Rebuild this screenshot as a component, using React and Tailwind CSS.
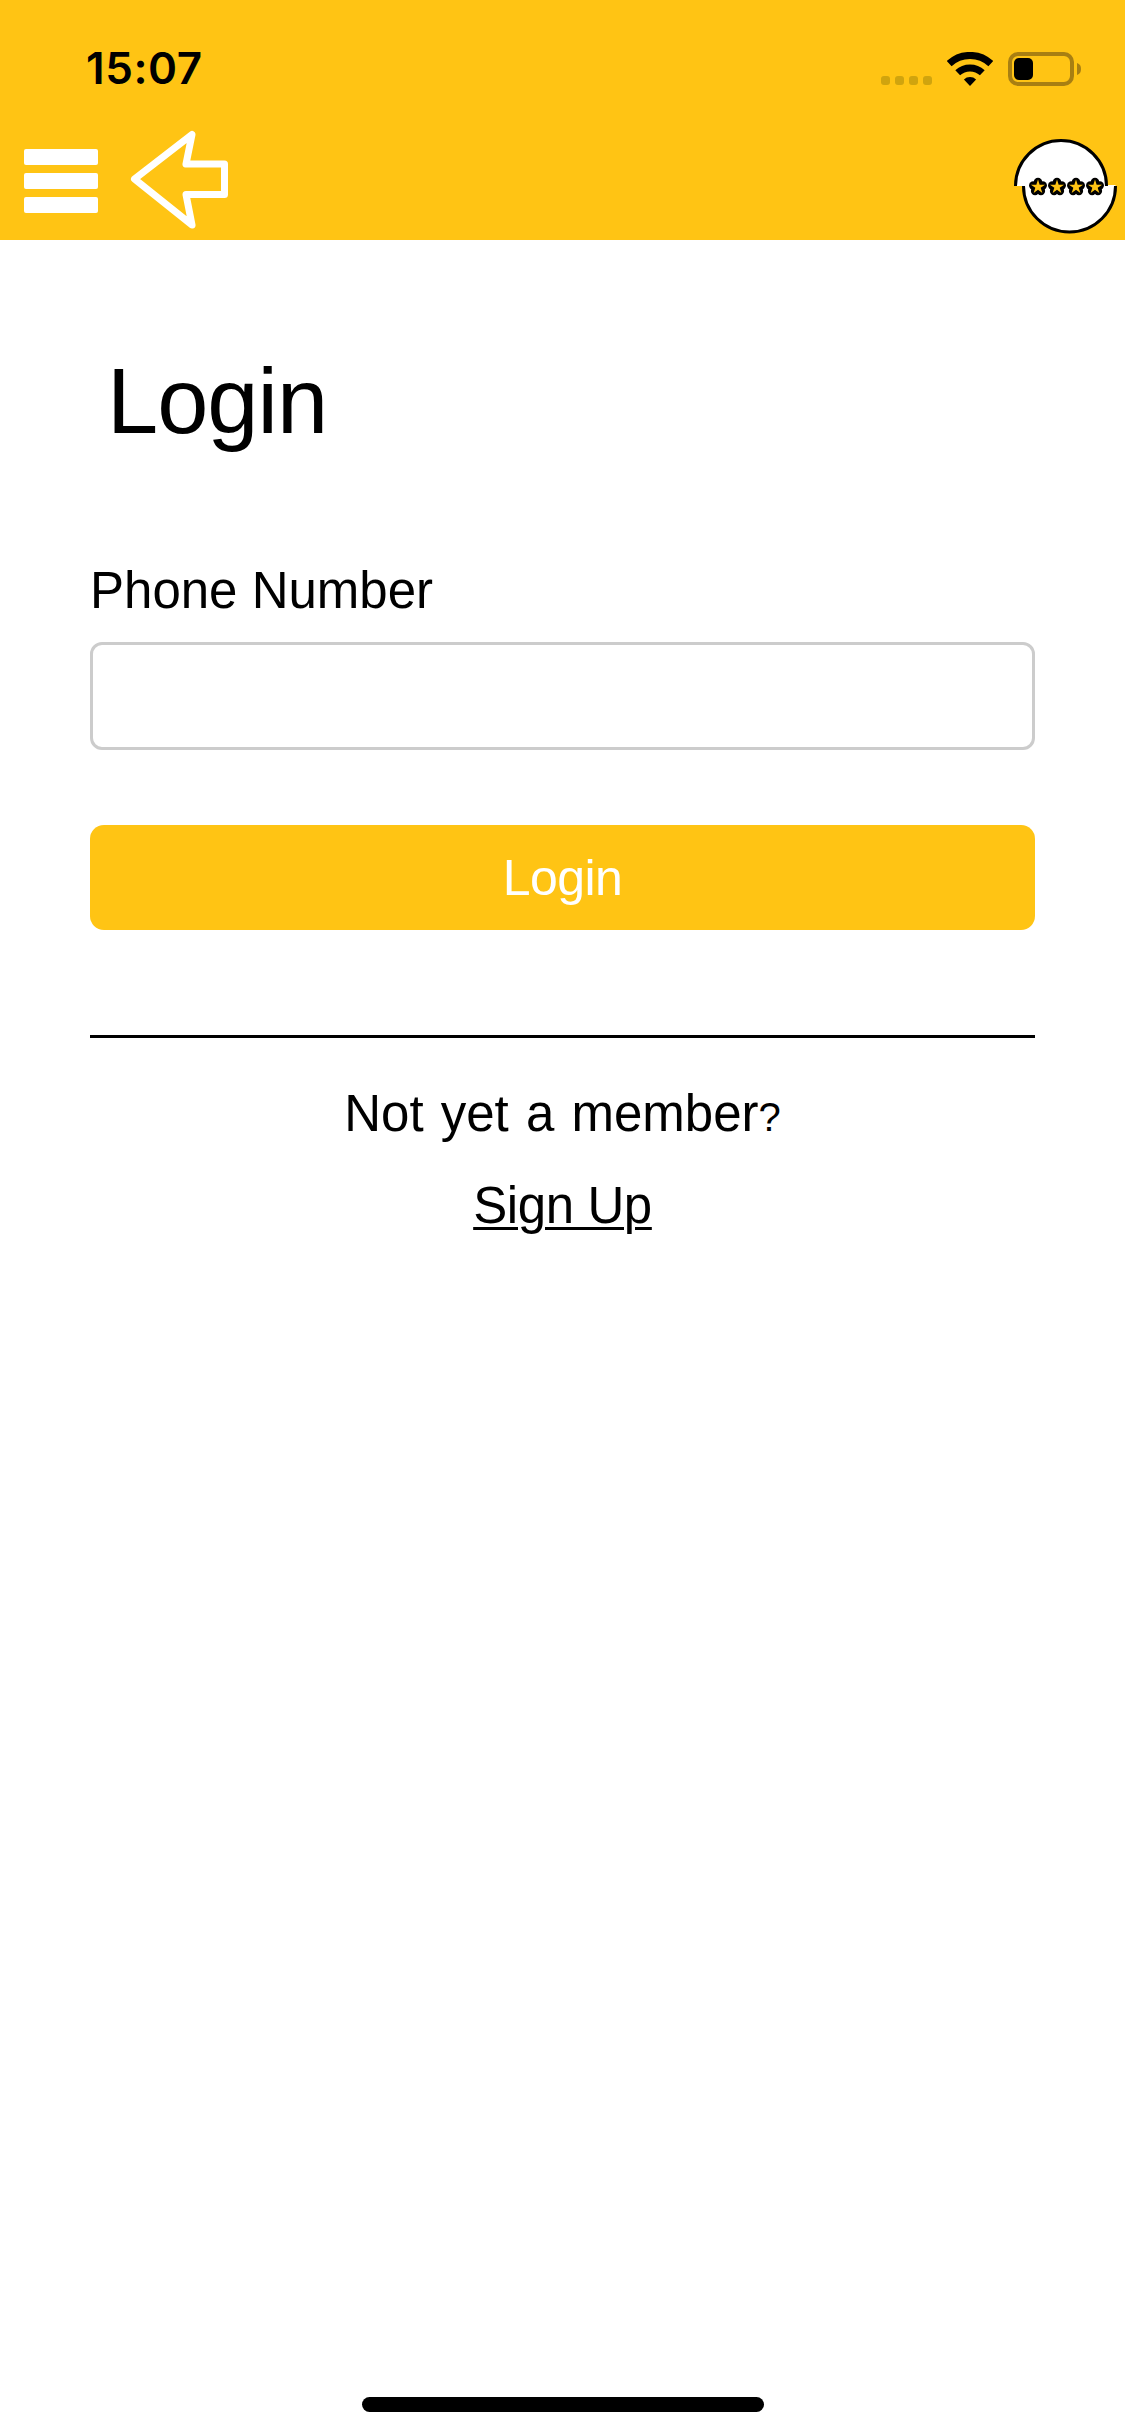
const font = { sans: "font-['Liberation_Sans',Arial,sans-serif]" };

function Wifi() {
  return (
    <svg width="46" height="34" viewBox="0 0 46 34" className="block">
      <path d="M2.2 11.6A30.5 30.5 0 0 1 43.8 11.6" fill="none" stroke="#000" strokeWidth="7" />
      <path d="M10.7 20.8A18 18 0 0 1 35.3 20.8" fill="none" stroke="#000" strokeWidth="7" />
      <path d="M23 34L16.9 27.4A9 9 0 0 1 29.1 27.4Z" fill="#000" />
    </svg>
  );
}

function Battery() {
  return (
    <svg width="74" height="34" viewBox="0 0 74 34" className="block">
      <rect x="2" y="2" width="62" height="30" rx="8" fill="none" stroke="#a87f12" strokeWidth="4" />
      <rect x="6" y="6" width="19" height="22" rx="5" fill="#000" />
      <path d="M69 11C72 12 73 14 73 17C73 20 72 22 69 23Z" fill="#a87f12" />
    </svg>
  );
}

function BackArrow() {
  return (
    <svg width="100" height="102" viewBox="130 129 100 102" className="block">
      <path
        d="M134.5 179L192 134.5L186 164H224.5V194.5H186L192 225Z"
        fill="none"
        stroke="#fff"
        strokeWidth="7"
        strokeLinejoin="round"
      />
    </svg>
  );
}

// Small black blossom holding a yellow star, one per rating point.
function Blossom({ x }) {
  const y = 187;
  const lobes = [0, 72, 144, 216, 288].map((deg) => {
    const r = (deg * Math.PI) / 180;
    return [x + Math.sin(r) * 5, y - Math.cos(r) * 5];
  });
  const star = [];
  for (let i = 0; i < 10; i++) {
    const r = (i * 36 * Math.PI) / 180;
    const d = i % 2 === 0 ? 7.4 : 2.8;
    star.push(`${x + Math.sin(r) * d},${y - Math.cos(r) * d}`);
  }
  return (
    <g>
      {lobes.map(([cx, cy], i) => (
        <circle key={i} cx={cx} cy={cy} r="4.2" fill="#000" />
      ))}
      <circle cx={x} cy={y} r="5.5" fill="#000" />
      <polygon points={star.join(" ")} fill="#ffc414" />
    </g>
  );
}

function RatingBadge() {
  return (
    <svg width="110" height="102" viewBox="1010 135 110 102" className="block">
      <path d="M1015.5 186A45.5 45.5 0 0 1 1106.5 186Z" fill="#fff" />
      <path d="M1023.5 185A46 46 0 0 0 1115.5 185Z" fill="#fff" />
      <path d="M1015.5 186A45.5 45.5 0 0 1 1106.5 186" fill="none" stroke="#000" strokeWidth="3" />
      <path d="M1023.5 186A46 46 0 0 0 1115.5 186" fill="none" stroke="#000" strokeWidth="3" />
      {[1038, 1057, 1076, 1095].map((x) => (
        <Blossom key={x} x={x} />
      ))}
    </svg>
  );
}

export default function App() {
  return (
    <div className={`flex min-h-[2436px] flex-col bg-white text-black ${font.sans}`}>
      <header className="h-[240px] bg-[#ffc414]">
        <div className="flex h-[131px] items-start pl-[86px] pr-[43px] pt-[52px]">
          <span className="font-['Inter',sans-serif] text-[44px] leading-[33px] font-semibold tracking-[0.6px]">
            15:07
          </span>
          <div className="ml-auto mt-[24px] flex gap-[5px]">
            {[0, 1, 2, 3].map((i) => (
              <span key={i} className="size-[9px] rounded-[3px] bg-[#d0a40e]" />
            ))}
          </div>
          <div className="ml-[15px]">
            <Wifi />
          </div>
          <div className="ml-[15px]">
            <Battery />
          </div>
        </div>
        <div className="flex h-[109px] items-start pl-[24px] pr-[5px]">
          <button className="mt-[18px] flex w-[74px] flex-col gap-[8px]">
            <span className="h-[16px] rounded-[2px] bg-white" />
            <span className="h-[16px] rounded-[2px] bg-white" />
            <span className="h-[16px] rounded-[2px] bg-white" />
          </button>
          <button className="ml-[32px] mt-[-2px]">
            <BackArrow />
          </button>
          <div className="ml-auto mt-[4px]">
            <RatingBadge />
          </div>
        </div>
      </header>

      <main className="px-[90px]">
        <h1 className="ml-[17px] mt-[106px] text-[92px] leading-[110px] font-normal tracking-[-1px]">Login</h1>
        <label className="mt-[105px] block text-[51px] leading-[60px]">Phone Number</label>
        <input
          type="tel"
          className="mt-[21px] block h-[108px] w-full rounded-[12px] border-[3px] border-[#cccccc] bg-white"
        />
        <button className="mt-[75px] block h-[105px] w-full rounded-[14px] bg-[#ffc414] pt-[2px] text-[50px] leading-[103px] tracking-[-0.6px] text-white">
          Login
        </button>
        <div className="mt-[105px] h-[3px] bg-black" />
        <p className="mt-[46px] text-center text-[51px] leading-[60px] [word-spacing:3px]">
          Not yet a member<span className="text-[40px]">?</span>
        </p>
        <p className="mt-[29px] text-center text-[51px] leading-[60px] tracking-[-0.4px]">
          <a className="underline decoration-[3px] underline-offset-[4px]">Sign Up</a>
        </p>
      </main>

      <div className="mb-[24px] mt-auto flex justify-center">
        <div className="h-[15px] w-[402px] rounded-full bg-black" />
      </div>
    </div>
  );
}
